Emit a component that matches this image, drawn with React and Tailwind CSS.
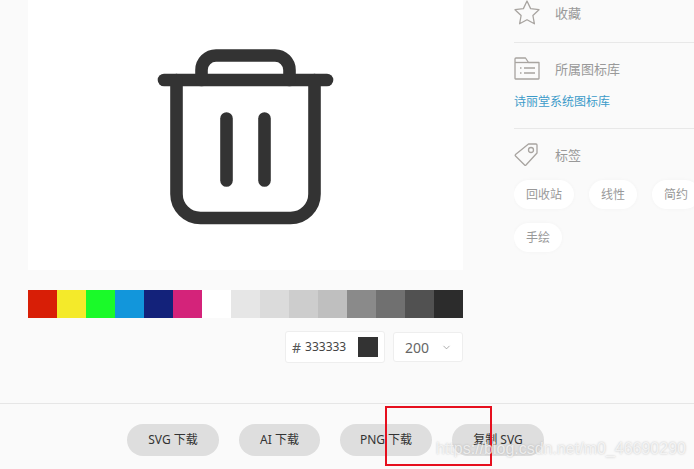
import { ChevronDown } from "lucide-react";

const swatches = [
  "bg-[#d81e06]", "bg-[#f4ea2a]", "bg-[#1afa29]", "bg-[#1296db]", "bg-[#13227a]",
  "bg-[#d4237a]", "bg-[#ffffff]", "bg-[#e6e6e6]", "bg-[#dbdbdb]", "bg-[#cdcdcd]",
  "bg-[#bfbfbf]", "bg-[#8a8a8a]", "bg-[#707070]", "bg-[#515151]", "bg-[#2c2c2c]",
];

const fontStack = "font-['Noto_Sans','Noto_Sans_CJK_SC',sans-serif]";

const TrashIcon = () => (
  <svg width="192" height="192" viewBox="149.5 39 192 192" fill="none" stroke="#333333" strokeWidth="12.6" strokeLinecap="round" strokeLinejoin="round">
    <path d="M163.5 80H326.5" />
    <path d="M176 80V194a24 24 0 0 0 24 24H290a24 24 0 0 0 24-24V80" />
    <path d="M201 80V70a14.5 14.5 0 0 1 14.5-14.5H274.5a14.5 14.5 0 0 1 14.5 14.5V80" />
    <path d="M226 118.5V180.5" />
    <path d="M264 118.5V180.5" />
  </svg>
);

const StarIcon = () => (
  <svg width="26" height="25" viewBox="0 0 26 25" fill="none" stroke="#a8a4a0" strokeWidth="1.3" strokeLinejoin="round">
    <path d="M13 1l3.6 7.6 8.4 1.1-6.1 5.8 1.5 8.3L13 19.7l-7.4 4.1 1.5-8.3L1 9.7l8.4-1.1z" />
  </svg>
);

const FolderIcon = () => (
  <svg width="26" height="23" viewBox="0 0 26 23" fill="none" stroke="#a8a4a0" strokeWidth="1.3" strokeLinejoin="round">
    <path d="M1 21.5V2a1 1 0 0 1 1-1h9.5l3 4.5H25V21.5a.5.5 0 0 1-.5.5H1.5a.5.5 0 0 1-.5-.5z" />
    <path d="M1 5.5H14.5" />
    <path d="M6 11h1.5M6 16h1.5M10 11h11M10 16h11" />
  </svg>
);

const TagIcon = () => (
  <svg width="25" height="25" viewBox="0 0 25 25" fill="none" stroke="#a8a4a0" strokeWidth="1.3" strokeLinejoin="round">
    <path d="M14.5 2H22a1 1 0 0 1 1 1v8L12 23a1 1 0 0 1-1.4 0L1.5 14a1 1 0 0 1 0-1.4z" />
    <circle cx="17" cy="8" r="2.5" />
  </svg>
);

const Tag = ({ children, width }) => (
  <span className={`flex h-[29px] items-center justify-center rounded-full bg-white text-[12px] text-[#999999] shadow-[0_0_4px_rgba(0,0,0,0.03)] shrink-0 ${width}`}>
    {children}
  </span>
);

const SideHeading = ({ icon, children }) => (
  <div className="flex items-center">
    <div className="flex w-[41px] shrink-0 items-center">{icon}</div>
    <span className="text-[13px] leading-[20px] text-[#999999]">{children}</span>
  </div>
);

const FooterButton = ({ children, width }) => (
  <button className={`flex h-8 items-center justify-center rounded-full bg-[#dedede] text-[12px] text-[#333333] ${width}`}>
    {children}
  </button>
);

export default function App() {
  return (
    <div className={`relative flex h-[469px] w-[694px] flex-col overflow-hidden bg-[#fafafa] ${fontStack}`}>
      <main className="flex h-[403px] shrink-0">
        {/* Preview column */}
        <section className="ml-[28px] w-[435px] shrink-0">
          <div className="flex h-[270px] items-center justify-center bg-white">
            <TrashIcon />
          </div>
          <div className="mt-5 flex h-[28px]">
            {swatches.map((color) => (
              <div key={color} className={`h-full w-[29px] ${color}`} />
            ))}
          </div>
          <div className="mt-[13px] flex items-center justify-end gap-2">
            <div className="flex h-8 w-[100px] items-center rounded-[3px] border border-[#eeeeee] bg-white pl-[6px] pr-[6px]">
              <span className="text-[14px] text-[#555555]">#</span>
              <span className="ml-[4px] text-[12px] text-[#444444]">333333</span>
              <span className="ml-auto h-5 w-5 bg-[#333333]" />
            </div>
            <div className="flex h-[30px] w-[70px] items-center justify-between rounded-[3px] border border-[#eeeeee] bg-white pl-[11px] pr-[10px]">
              <span className="text-[14px] text-[#666666]">200</span>
              <ChevronDown size={11} strokeWidth={1.5} className="text-[#888888]" />
            </div>
          </div>
        </section>

        {/* Info column */}
        <aside className="ml-[51px] flex-1 overflow-hidden">
          <SideHeading icon={<StarIcon />}>收藏</SideHeading>
          <div className="mt-[17px] h-px bg-[#e8e8e8]" />
          <div className="mt-[14px]">
            <SideHeading icon={<FolderIcon />}>所属图标库</SideHeading>
          </div>
          <div className="mt-[12px] text-[12px] leading-[20px] text-[#3c9ac9]">诗丽堂系统图标库</div>
          <div className="mt-[16px] h-px bg-[#e8e8e8]" />
          <div className="mt-[13px]">
            <SideHeading icon={<TagIcon />}>标签</SideHeading>
          </div>
          <div className="mt-[13px] flex gap-[15px]">
            <Tag width="w-[60px]">回收站</Tag>
            <Tag width="w-[48px]">线性</Tag>
            <Tag width="w-[48px]">简约</Tag>
          </div>
          <div className="mt-[14px] flex">
            <Tag width="w-[48px]">手绘</Tag>
          </div>
        </aside>
      </main>

      <footer className="flex flex-1 justify-center gap-5 border-t border-[#e6e6e6] pt-5 pl-[77px] pr-[100px]">
        <FooterButton width="w-[92px]">SVG 下载</FooterButton>
        <FooterButton width="w-[81px]">AI 下载</FooterButton>
        <FooterButton width="w-[92px]">PNG 下载</FooterButton>
        <FooterButton width="w-[92px]">复制 SVG</FooterButton>
      </footer>

      {/* Annotation and watermark painted over the screenshot */}
      <div className="absolute left-[385px] top-[406px] h-[60px] w-[107px] border-2 border-[#e60f1e]" />
      <div className="absolute left-[436px] top-[439px] font-['Liberation_Sans',sans-serif] text-[16px] leading-[20px] whitespace-nowrap text-white/70 [text-shadow:0_0_2px_rgba(120,120,120,0.45)]">
        https://blog.csdn.net/m0_46690290
      </div>
    </div>
  );
}
